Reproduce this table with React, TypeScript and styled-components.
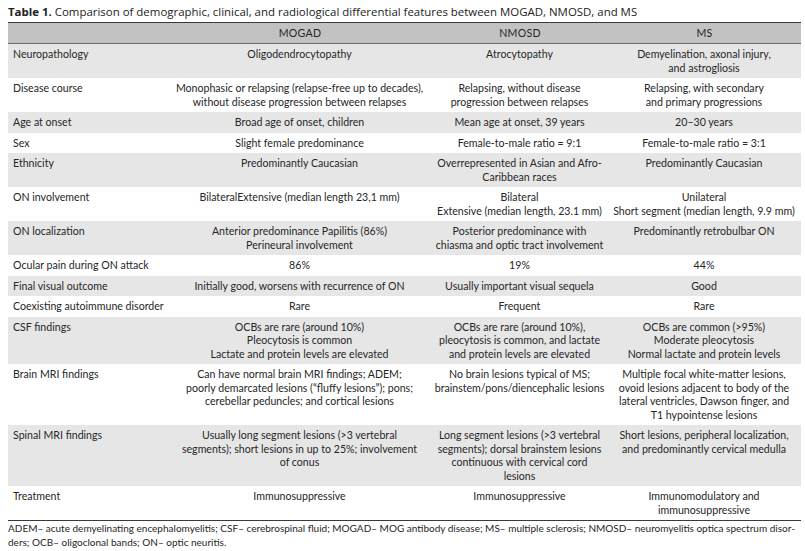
import React from "react";
import styled, { createGlobalStyle } from "styled-components";

const Global = createGlobalStyle`
  html, body { margin: 0; padding: 0; background: #ffffff; }
  body { width: 805px; height: 551px; overflow: hidden; }
`;

const Page = styled.div`
  padding: 5px 4px 0 8px;
  color: #262626;
  font-family: Lato, "Open Sans", sans-serif;
`;

const Title = styled.div`
  font-family: "Open Sans", Lato, sans-serif;
  font-size: 11.45px;
  line-height: 14px;
  height: 17px;
  color: #222;
  b { font-weight: 700; }
`;

const Table = styled.div`
  width: 793px;
  border-top: 1.5px solid #3a3a3a;
  border-bottom: 1.5px solid #3a3a3a;
`;

const Row = styled.div<{ $shade: "head" | "gray" | "white" }>`
  display: grid;
  grid-template-columns: 160px 264px 176px 193px;
  background: ${(p) =>
    p.$shade === "head" ? "#c2c2c2" : p.$shade === "gray" ? "#e6e6e6" : "#ffffff"};
  ${(p) => (p.$shade === "head" ? "border-bottom: 1px solid #6a6a6a; height: 20px;" : "")}
`;

const Cell = styled.div<{ $first?: boolean; $head?: boolean }>`
  padding: ${(p) => (p.$head ? "4px 2px 0" : "4px 3px 3px")};
  padding-left: ${(p) => (p.$first ? "5px" : "2px")};
  text-align: ${(p) => (p.$first ? "left" : "center")};
  font-size: 10.6px;
  line-height: 13.5px;
  white-space: nowrap;
  letter-spacing: ${(p) => (p.$head ? "0.3px" : "0")};
  color: #262626;
`;

const Foot = styled.div`
  width: 793px;
  padding-top: 1px;
  font-size: 10px;
  line-height: 13.5px;
  color: #262626;
  white-space: nowrap;
`;

type RowData = { label: string; cols: string[][]; shade: "gray" | "white" };

const rows: RowData[] = [
  { label: "Neuropathology", shade: "gray", cols: [["Oligodendrocytopathy"], ["Atrocytopathy"], ["Demyelination, axonal injury,", "and astrogliosis"]] },
  { label: "Disease course", shade: "white", cols: [["Monophasic or relapsing (relapse-free up to decades),", "without disease progression between relapses"], ["Relapsing, without disease", "progression between relapses"], ["Relapsing, with secondary", "and primary progressions"]] },
  { label: "Age at onset", shade: "gray", cols: [["Broad age of onset, children"], ["Mean age at onset, 39 years"], ["20–30 years"]] },
  { label: "Sex", shade: "white", cols: [["Slight female predominance"], ["Female-to-male ratio = 9:1"], ["Female-to-male ratio = 3:1"]] },
  { label: "Ethnicity", shade: "gray", cols: [["Predominantly Caucasian"], ["Overrepresented in Asian and Afro-", "Caribbean races"], ["Predominantly Caucasian"]] },
  { label: "ON involvement", shade: "white", cols: [["BilateralExtensive (median length 23,1 mm)"], ["Bilateral", "Extensive (median length, 23.1 mm)"], ["Unilateral", "Short segment (median length, 9.9 mm)"]] },
  { label: "ON localization", shade: "gray", cols: [["Anterior predominance Papilitis (86%)", "Perineural involvement"], ["Posterior predominance with", "chiasma and optic tract involvement"], ["Predominantly retrobulbar ON"]] },
  { label: "Ocular pain during ON attack", shade: "white", cols: [["86%"], ["19%"], ["44%"]] },
  { label: "Final visual outcome", shade: "gray", cols: [["Initially good, worsens with recurrence of ON"], ["Usually important visual sequela"], ["Good"]] },
  { label: "Coexisting autoimmune disorder", shade: "white", cols: [["Rare"], ["Frequent"], ["Rare"]] },
  { label: "CSF findings", shade: "gray", cols: [["OCBs are rare (around 10%)", "Pleocytosis is common", "Lactate and protein levels are elevated"], ["OCBs are rare (around 10%),", "pleocytosis is common, and lactate", "and protein levels are elevated"], ["OCBs are common (>95%)", "Moderate pleocytosis", "Normal lactate and protein levels"]] },
  { label: "Brain MRI findings", shade: "white", cols: [["Can have normal brain MRI findings; ADEM;", "poorly demarcated lesions (“fluffy lesions”); pons;", "cerebellar peduncles; and cortical lesions"], ["No brain lesions typical of MS;", "brainstem/pons/diencephalic lesions"], ["Multiple focal white-matter lesions,", "ovoid lesions adjacent to body of the", "lateral ventricles, Dawson finger, and", "T1 hypointense lesions"]] },
  { label: "Spinal MRI findings", shade: "gray", cols: [["Usually long segment lesions (>3 vertebral", "segments); short lesions in up to 25%; involvement", "of conus"], ["Long segment lesions (>3 vertebral", "segments); dorsal brainstem lesions", "continuous with cervical cord", "lesions"], ["Short lesions, peripheral localization,", "and predominantly cervical medulla"]] },
  { label: "Treatment", shade: "white", cols: [["Immunosuppressive"], ["Immunosuppressive"], ["Immunomodulatory and", "immunosuppressive"]] },
];

const Lines: React.FC<{ lines: string[] }> = ({ lines }) => (
  <>
    {lines.map((l, i) => (
      <React.Fragment key={i}>
        {i > 0 && <br />}
        {l}
      </React.Fragment>
    ))}
  </>
);

export default function App() {
  return (
    <Page>
      <Global />
      <Title>
        <b>Table 1.</b> Comparison of demographic, clinical, and radiological differential features between MOGAD, NMOSD, and MS
      </Title>
      <Table>
        <Row $shade="head">
          <Cell $first $head />
          <Cell $head>MOGAD</Cell>
          <Cell $head>NMOSD</Cell>
          <Cell $head>MS</Cell>
        </Row>
        {rows.map((r) => (
          <Row key={r.label} $shade={r.shade}>
            <Cell $first>{r.label}</Cell>
            {r.cols.map((c, i) => (
              <Cell key={i}>
                <Lines lines={c} />
              </Cell>
            ))}
          </Row>
        ))}
      </Table>
      <Foot>
        ADEM– acute demyelinating encephalomyelitis; CSF– cerebrospinal fluid; MOGAD– MOG antibody disease; MS– multiple sclerosis; NMOSD– neuromyelitis optica spectrum disor-
        <br />
        ders; OCB– oligoclonal bands; ON– optic neuritis.
      </Foot>
    </Page>
  );
}
